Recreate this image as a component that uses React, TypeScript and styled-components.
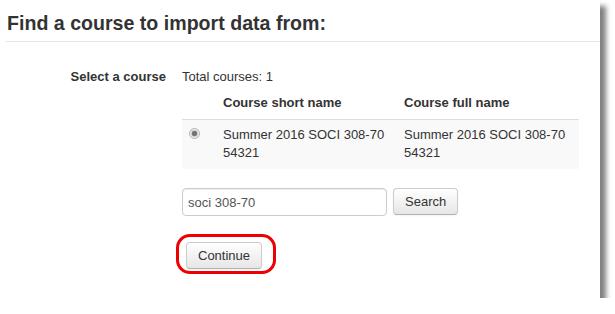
import React from "react";
import styled, { createGlobalStyle } from "styled-components";

const Global = createGlobalStyle`
  html, body { margin: 0; padding: 0; background: #ffffff; }
  body {
    font-family: "Liberation Sans", Arial, Helvetica, sans-serif;
    font-size: 13px;
    color: #333333;
  }
`;

const Panel = styled.div`
  width: 600px;
  height: 298px;
  background: #ffffff;
  box-shadow: 6px 6px 5px rgba(0, 0, 0, 0.5);
  box-sizing: border-box;
  padding: 0 0 0 6px;
  display: flex;
  flex-direction: column;
`;

const Heading = styled.h2`
  margin: 0;
  padding: 11px 0 6px 1px;
  font-size: 19.6px;
  line-height: 24px;
  font-weight: bold;
  color: #333333;
  border-bottom: 1px solid #e5e5e5;
`;

const FormRow = styled.div`
  display: grid;
  grid-template-columns: 160px 397px;
  column-gap: 16px;
  margin-top: 26px;
`;

const Label = styled.div`
  text-align: right;
  font-weight: bold;
  line-height: 18px;
`;

const Content = styled.div`
  display: flex;
  flex-direction: column;
  align-items: flex-start;
`;

const Total = styled.div`
  line-height: 18px;
`;

const Table = styled.table`
  width: 397px;
  border-collapse: collapse;
  table-layout: fixed;
`;

const Th = styled.th<{ $w: number }>`
  width: ${(p) => p.$w - 16}px;
  text-align: left;
  font-weight: bold;
  line-height: 18px;
  padding: 8px 8px 7px;
  vertical-align: bottom;
`;

const BodyRow = styled.tr`
  background: #f9f9f9;
  border-top: 1px solid #dddddd;
`;

const Td = styled.td`
  line-height: 18px;
  padding: 6px 8px 7px;
  vertical-align: top;
`;

const RadioCell = styled.td`
  padding: 8px 0 0 7px;
  vertical-align: top;
`;

const Radio = styled.span`
  display: block;
  width: 11px;
  height: 11px;
  box-sizing: border-box;
  border-radius: 50%;
  border: 1px solid #b5b5b5;
  background: radial-gradient(circle at 50% 50%, #6f6f6f 0, #7a7a7a 2.4px, #dcdcdc 3.2px, #f2f2f2 5px);
`;

const SearchRow = styled.div`
  display: flex;
  align-items: flex-start;
  gap: 6px;
  margin-top: 19px;
`;

const Input = styled.div`
  width: 205px;
  height: 28px;
  box-sizing: border-box;
  border: 1px solid #cccccc;
  border-radius: 4px;
  padding: 0 5px;
  display: flex;
  align-items: center;
  color: #555555;
  box-shadow: inset 0 1px 1px rgba(0, 0, 0, 0.075);
`;

const Button = styled.button<{ $h: number }>`
  height: ${(p) => p.$h}px;
  padding: 0 11px;
  font-family: "Liberation Sans", Arial, sans-serif;
  font-size: 13px;
  color: #333333;
  background: linear-gradient(#ffffff, #e6e6e6);
  border: 1px solid #cccccc;
  border-bottom-color: #b3b3b3;
  border-radius: 4px;
  box-shadow: inset 0 1px 0 rgba(255, 255, 255, 0.2), 0 1px 2px rgba(0, 0, 0, 0.05);
  cursor: pointer;
`;

const ContinueWrap = styled.div`
  position: relative;
  margin: 26px 0 0 4px;
`;

const Highlight = styled.span`
  position: absolute;
  left: -10px;
  top: -8px;
  right: -14px;
  bottom: -5px;
  border: 3px solid #ee0000;
  border-radius: 14px;
  pointer-events: none;
`;

export default function App() {
  return (
    <>
      <Global />
      <Panel>
        <Heading>Find a course to import data from:</Heading>
        <FormRow>
          <Label>Select a course</Label>
          <Content>
            <Total>Total courses: 1</Total>
            <Table>
              <thead>
                <tr>
                  <Th $w={33}></Th>
                  <Th $w={181}>Course short name</Th>
                  <Th $w={183}>Course full name</Th>
                </tr>
              </thead>
              <tbody>
                <BodyRow>
                  <RadioCell>
                    <Radio />
                  </RadioCell>
                  <Td>Summer 2016 SOCI 308-70 54321</Td>
                  <Td>Summer 2016 SOCI 308-70 54321</Td>
                </BodyRow>
              </tbody>
            </Table>
            <SearchRow>
              <Input>soci 308-70</Input>
              <Button $h={27}>Search</Button>
            </SearchRow>
            <ContinueWrap>
              <Button $h={27}>Continue</Button>
              <Highlight />
            </ContinueWrap>
          </Content>
        </FormRow>
      </Panel>
    </>
  );
}
